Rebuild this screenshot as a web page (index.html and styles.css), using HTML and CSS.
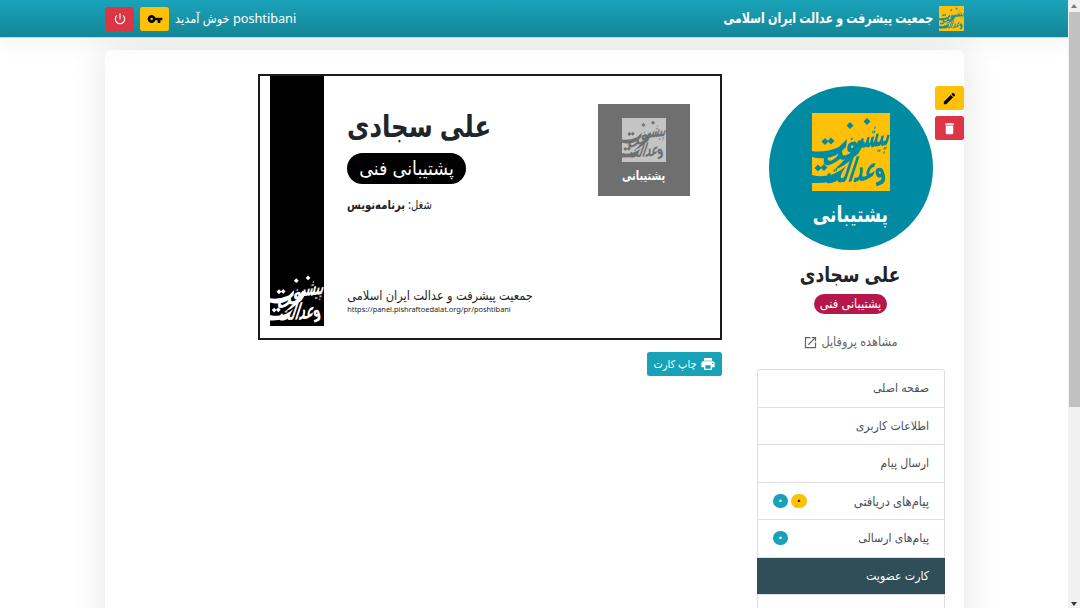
FILE: index.html
```html
<!DOCTYPE html>
<html lang="fa" dir="rtl">
<head>
<meta charset="utf-8">
<title>جمعیت پیشرفت و عدالت ایران اسلامی</title>
<link rel="stylesheet" href="styles.css">
</head>
<body>
<svg class="defs" width="0" height="0" aria-hidden="true">
  <symbol id="mark" viewBox="0 0 78 78">
    <g direction="rtl" class="mark-text">
      <text transform="translate(76,32) rotate(-6) skewX(-20) scale(1,1.900)" font-size="18" textLength="34" lengthAdjust="spacingAndGlyphs">پیشر</text>
      <text transform="translate(47,41) rotate(-20) skewX(-18) scale(1,1.500)" font-size="19" textLength="39" lengthAdjust="spacingAndGlyphs">فت</text>
      <text transform="translate(74,63) rotate(-14) scale(1,1.700)" font-size="18">و</text>
      <text transform="translate(61,67) rotate(-4) skewX(-22) scale(1,1.800)" font-size="18" textLength="50" lengthAdjust="spacingAndGlyphs">عدالت</text>
    </g>
    <path d="M0 38Q13 40 27 34L35 26 34 34Q25 44 14 45Q7 46 0 44ZM0 62Q15 66 29 57L34 53 28 63Q20 71 0 70ZM53 29Q40 51 22 57Q35 46 47 27Z"/>
    <path d="M13 25l3.500 3.500-3.500 3.500-3.500-3.500zM19 24.500l3.500 3.500-3.500 3.500-3.500-3.500zM6 51.500l3.500 3.500L6 58.500 2.500 55zM12 51l3.500 3.500-3.500 3.500-3.500-3.500zM38 9l3.500 3.500L38 16l-3.500-3.500zM55 5l3.500 3.500L55 12l-3.500-3.500z"/>
  </symbol>
</svg>
<div class="page">
  <header class="topbar">
    <div class="brand">
      <svg class="brand-logo"><rect width="100%" height="100%" fill="#ffc107"/><use href="#mark" fill="#178fa3"/></svg>
      <span class="brand-name">جمعیت پیشرفت و عدالت ایران اسلامی</span>
    </div>
    <div class="account">
      <span class="welcome"><bdi>poshtibani</bdi> خوش آمدید</span>
      <button class="btn warning"><svg width="16" height="16" viewBox="0 0 24 24"><path d="M12.65 10A6 6 0 1 0 12.65 14H16v4h4v-4h3v-4zM7 14a2 2 0 1 1 0-4 2 2 0 0 1 0 4z"/></svg></button>
      <button class="btn danger"><svg width="14" height="14" viewBox="0 0 24 24"><path d="M13 2h-2v11h2zm4.800 3.200-1.400 1.400A7 7 0 1 1 7.600 6.600L6.200 5.200A9 9 0 1 0 17.800 5.200z"/></svg></button>
    </div>
  </header>
  <main class="panel">
    <aside class="side">
      <div class="profile">
        <div class="avatar">
          <svg class="avatar-logo"><rect width="100%" height="100%" fill="#ffc107"/><use href="#mark" fill="#008ba3"/></svg>
          <span class="avatar-title">پشتیبانی</span>
        </div>
        <div class="tools">
          <button class="btn warning"><svg width="15" height="15" viewBox="0 0 24 24"><path d="M3 17.200V21h3.800L17.800 10 14 6.200zM20.700 7a1 1 0 0 0 0-1.400l-2.300-2.300a1 1 0 0 0-1.400 0L15 5.200 18.800 9z"/></svg></button>
          <button class="btn danger"><svg width="15" height="15" viewBox="0 0 24 24"><path d="M6 19a2 2 0 0 0 2 2h8a2 2 0 0 0 2-2V7H6zM19 4h-3.500l-1-1h-5l-1 1H5v2h14z"/></svg></button>
        </div>
      </div>
      <h2 class="name">علی سجادی</h2>
      <span class="role">پشتیبانی فنی</span>
      <a class="view"><span>مشاهده پروفایل</span><svg width="15" height="15" viewBox="0 0 24 24"><path d="M19 19H5V5h7V3H3v18h18v-9h-2zM14 3v2h3.600l-9.800 9.800 1.400 1.400L19 6.400V10h2V3z"/></svg></a>
      <nav class="menu">
        <a class="item"><span>صفحه اصلی</span></a>
        <a class="item"><span>اطلاعات کاربری</span></a>
        <a class="item"><span>ارسال پیام</span></a>
        <a class="item"><span class="wide">پیام‌های دریافتی</span><span class="counts"><b class="count new">۰</b><b class="count">۰</b></span></a>
        <a class="item"><span>پیام‌های ارسالی</span><span class="counts"><b class="count">۰</b></span></a>
        <a class="item active"><span>کارت عضویت</span></a>
        <a class="item"></a>
      </nav>
    </aside>
    <section class="content">
      <article class="card">
        <div class="photo">
          <svg class="photo-logo"><rect width="100%" height="100%" fill="#c4c4c4"/><use href="#mark" fill="#6f6f6f"/></svg>
          <span class="photo-title">پشتیبانی</span>
        </div>
        <div class="details">
          <h1 class="card-name">علی سجادی</h1>
          <span class="card-role">پشتیبانی فنی</span>
          <p class="job">شغل: <b>برنامه‌نویس</b></p>
          <p class="org">جمعیت پیشرفت و عدالت ایران اسلامی</p>
          <p class="url">https://panel.pishraftoedalat.org/pr/poshtibani</p>
        </div>
        <div class="band"><svg class="band-logo"><use href="#mark" fill="#fff"/></svg></div>
      </article>
      <button class="btn print"><svg width="16" height="16" viewBox="0 0 24 24"><path d="M19 8H5a3 3 0 0 0-3 3v6h4v4h12v-4h4v-6a3 3 0 0 0-3-3zm-3 11H8v-5h8zm3-7a1 1 0 1 1 0-2 1 1 0 0 1 0 2zM18 3H6v4h12z"/></svg><span>چاپ کارت</span></button>
    </section>
  </main>
</div>
<div class="scrollbar"><i class="arrow up"></i><i class="thumb"></i><i class="arrow down"></i></div>
</body>
</html>
```
FILE: styles.css
```css
* { box-sizing: border-box; }
body {
  margin: 0; height: 608px; overflow: hidden; display: flex;
  font: 12px/18px "Noto Sans", "DejaVu Sans Condensed", "DejaVu Sans", sans-serif; color: #212529; background: #fff;
}
h1, h2, p { margin: 0; }
svg { display: block; fill: currentColor; flex: none; }
.defs { display: none; }
.mark-text { font-family: "DejaVu Sans", sans-serif; font-weight: bold; }
.page { width: 1068px; height: 608px; overflow: hidden; order: 2; }
.topbar {
  height: 38px; padding: 0 104px 0 105px; display: flex; justify-content: space-between; align-items: center;
  color: #fff; background: linear-gradient(#1aa3ba, #148697); border-bottom: 1px solid #b9dfe5;
  position: relative; box-shadow: 0 4px 24px rgba(0,0,0,.06);
}
.brand { display: flex; align-items: center; gap: 6px; }
.brand-logo { width: 25px; height: 25px; }
.brand-name { font-weight: bold; font-size: 14px; line-height: 20px; margin-top: -2px; white-space: nowrap; transform: scaleX(.88); transform-origin: right; }
.account { display: flex; align-items: center; gap: 6px; }
.welcome { font-size: 12.700px; line-height: 20px; margin-top: -2px; white-space: nowrap; }
.btn {
  border: 0; padding: 0; margin: 0; width: 29px; height: 24px; border-radius: 2.500px; font: inherit;
  display: flex; align-items: center; justify-content: center;
}
.warning { background: #ffc107; color: #000; }
.danger { background: #dc3545; color: #fff; }
.panel {
  margin: 12px 104px 0 105px; height: 600px; border-radius: 6px; background: #fff;
  box-shadow: 0 0 36px rgba(0,0,0,.11); display: flex; justify-content: space-between; align-items: flex-start;
}
.side { width: 225px; padding: 36px 19px 0 17px; display: flex; flex-direction: column; align-items: center; }
.profile { position: relative; width: 188px; height: 165px; display: flex; justify-content: center; }
.avatar {
  width: 164px; height: 164px; border-radius: 50%; background: #008ba3; color: #fff;
  display: flex; flex-direction: column; align-items: center; padding-top: 27px;
}
.avatar-logo { width: 78px; height: 78px; }
.avatar-title { font-size: 22px; font-weight: bold; line-height: 30px; margin-top: 7px; transform: scaleX(.87); }
.tools { position: absolute; right: -19px; top: 0; display: flex; flex-direction: column; gap: 6px; }
.name { font-size: 21.500px; line-height: 30px; margin-top: 8px; transform: scaleX(.88); }
.role { background: #b5174b; color: #fff; height: 20px; line-height: 19px; font-size: 12.700px; border-radius: 10px; padding: 0 6px; margin-top: 5px; }
.view { display: flex; align-items: center; gap: 3px; color: #666; font-size: 12.600px; margin-top: 19px; }
.menu { width: 188px; margin-top: 18px; border: 1px solid #dfdfdf; border-radius: 3px 3px 0 0; }
.item { height: 37.500px; padding: 0 14.500px 0 15px; display: flex; align-items: center; justify-content: space-between; border-bottom: 1px solid #dfdfdf; color: #495057; font-size: 12.200px; }
.wide { font-size: 12.800px; }
.active { background: #304e58; color: #fff; margin: 0 -1px; padding: 0 15.500px; }
.counts { display: flex; gap: 3px; }
.count { width: 15.500px; height: 14px; line-height: 13px; border-radius: 7px; text-align: center; font-size: 13px; color: #fff; background: #17a2b8; }
.new { background: #ffc107; color: #212529; }
.content { flex: 1; padding: 24px 17px 0 0; display: flex; flex-direction: column; align-items: flex-start; gap: 12px; }
.card { width: 464.500px; height: 266px; border: 2px solid #1b1b1b; display: flex; padding-left: 10.400px; }
.photo { width: 92px; height: 92px; background: #6f6f6f; color: #fff; margin: 28px 0 0; margin-right: 30px; padding-top: 14px; display: flex; flex-direction: column; align-items: center; }
.photo-logo { width: 44px; height: 44px; }
.photo-title { font-size: 13px; font-weight: bold; margin-top: 4px; transform: scaleX(.84); }
.details { flex: 1; padding: 28px 0 0 23.300px; display: flex; flex-direction: column; align-items: flex-end; }
.card-name { font-size: 30.500px; line-height: 43px; transform: scaleX(.89); transform-origin: left; }
.card-role { background: #000; color: #fff; border-radius: 16px; height: 31px; line-height: 30px; font-size: 19.500px; padding: 0 12px; margin-top: 6px; }
.job { margin-top: 12px; font-size: 12.300px; transform: scaleX(.91); transform-origin: left; }
.org { margin-top: 72px; font-size: 12.700px; }
.url { font-size: 7.400px; line-height: 10px; direction: ltr; }
.band { width: 54px; height: 250px; background: #000; display: flex; align-items: flex-end; }
.band-logo { width: 54px; height: 54px; }
.print { width: 75px; background: #17a2b8; color: #fff; gap: 3px; font-size: 11px; }
.scrollbar { order: 1; width: 12px; height: 608px; background: #f0f0f0; display: flex; flex-direction: column; align-items: center; padding: 4px 0 2px; }
.thumb { width: 11px; height: 395px; background: #c1c1c1; margin: 4px 0 auto; }
.arrow { width: 0; height: 0; border: 3px solid transparent; }
.up { border-top: 0; border-bottom: 4px solid #777; }
.down { border-bottom: 0; border-top: 4px solid #333; }
```
